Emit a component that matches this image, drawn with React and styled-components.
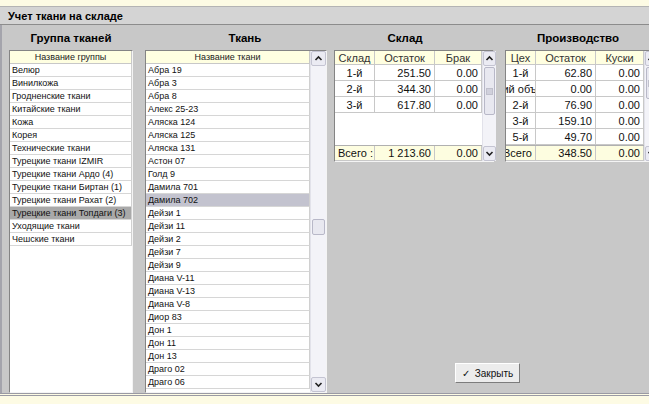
import styled, { createGlobalStyle } from "styled-components";

const GlobalStyle = createGlobalStyle`
  html, body {
    margin: 0;
    padding: 0;
    background: #c8c8c8;
  }
  body {
    font-family: "Liberation Sans", Arial, sans-serif;
    color: #000;
  }
`;

const Window = styled.div`
  width: 649px;
  height: 404px;
  display: flex;
  flex-direction: column;
  overflow: hidden;
  background: #c8c8c8;
`;

const TopStrip = styled.div`
  height: 6px;
  flex: none;
  background: #fdfbe4;
  border-bottom: 1px solid #b4b4b4;
`;

const TitleBar = styled.div`
  height: 17px;
  flex: none;
  display: flex;
  align-items: center;
  padding-left: 8px;
  background: #d4d4d4;
  border-bottom: 1px solid #8c8c8c;
  font-size: 11px;
  font-weight: bold;
`;

const Body = styled.div`
  flex: 1;
  min-height: 0;
  display: flex;
  padding-left: 7px;
  border-left: 2px solid #a4a4ac;
`;

const BottomStrip = styled.div`
  height: 8px;
  flex: none;
  background: #fdfbe4;
  border-top: 3px double #9a9aa4;
`;

const Column = styled.div`
  display: flex;
  flex-direction: column;
  flex: none;
  width: ${(p) => p.$width}px;
  margin-right: ${(p) => p.$gap || 0}px;
`;

const Heading = styled.div`
  height: 25px;
  flex: none;
  display: flex;
  align-items: center;
  justify-content: center;
  padding-left: ${(p) => p.$left || 0}px;
  padding-right: ${(p) => p.$right || 0}px;
  font-size: 11.5px;
  font-weight: bold;
`;

const ListBox = styled.div`
  flex: 1;
  min-height: 0;
  display: flex;
  background: #fff;
  border: 1px solid;
  border-color: #848484 #f4f4f4 #f4f4f4 #848484;
  overflow: hidden;
`;

const ListBody = styled.div`
  flex: 1;
  min-width: 0;
  display: flex;
  flex-direction: column;
`;

const ListHeader = styled.div`
  height: 12px;
  line-height: 12px;
  flex: none;
  background: #ffffe1;
  text-align: center;
  font-size: 9px;
  color: #222;
  border-bottom: 1px solid #c8c8c8;
  border-right: 1px solid #c8c8c8;
`;

const ListRow = styled.div`
  height: 12px;
  line-height: 12px;
  flex: none;
  padding-left: 2px;
  font-size: 9px;
  white-space: nowrap;
  overflow: hidden;
  color: #111;
  background: ${(p) => p.$selected || "#fff"};
  border-bottom: 1px solid #d6d6d6;
  border-right: 1px solid #d0d0d0;
`;

const ScrollBar = styled.div`
  width: ${(p) => p.$width || 15}px;
  flex: none;
  display: flex;
  flex-direction: column;
  background: #f3f3f8;
  border-left: 1px solid #e2e2ea;
`;

const ScrollButton = styled.div`
  height: 13px;
  flex: none;
  display: flex;
  align-items: center;
  justify-content: center;
  background: #ebebf3;
  border: 1px solid #c4c4d2;
  border-radius: 2px;
`;

const Track = styled.div`
  flex: 1;
  display: flex;
  flex-direction: column;
`;

const Thumb = styled.div`
  height: ${(p) => p.$height}px;
  margin: ${(p) => p.$top}px 1px 0;
  flex: none;
  display: flex;
  align-items: center;
  justify-content: center;
  background: #e8e8f0;
  border: 1px solid #b8b8c8;
  border-radius: 2px;
`;

const Grip = styled.div`
  width: 5px;
  height: 5px;
  background: #d0d0dc;
  border: 1px solid #c0c0cc;
`;

const RightArea = styled.div`
  flex: none;
  display: flex;
  flex-direction: column;
`;

const TablesRow = styled.div`
  display: flex;
  gap: 11px;
`;

const TableBox = styled.div`
  height: 110px;
  display: flex;
  background: #fff;
  border: 1px solid;
  border-color: #848484 #f4f4f4 #f4f4f4 #848484;
`;

const Grid = styled.div`
  display: flex;
  flex-direction: column;
  flex: none;
`;

const GridRow = styled.div`
  display: grid;
  grid-template-columns: ${(p) => p.$cols};
  height: ${(p) => p.$height}px;
  flex: none;
  background: ${(p) => p.$bg || "#fff"};
  border-bottom: 1px solid #c8c8c8;
  border-top: ${(p) => (p.$total ? "1px solid #b0b0b0" : "none")};
`;

const Filler = styled.div`
  flex: 1;
  background: #fff;
`;

const Cell = styled.div`
  display: flex;
  align-items: center;
  justify-content: ${(p) => p.$align || "center"};
  padding: 0 ${(p) => (p.$align === "center" ? 0 : 3)}px;
  padding-right: ${(p) => (p.$shift ? p.$shift : p.$align === "center" ? 0 : 3)}px;
  overflow: hidden;
  white-space: nowrap;
  font-size: 11px;
  color: ${(p) => (p.$head ? "#333" : "#111")};
  border-right: 1px solid #c8c8c8;
`;

const CloseButton = styled.button`
  align-self: flex-start;
  margin: auto 0 10px 121px;
  width: 65px;
  height: 20px;
  display: flex;
  align-items: center;
  justify-content: center;
  gap: 5px;
  padding: 0;
  background: #ececec;
  border: 1px solid;
  border-color: #ffffff #7c7c7c #7c7c7c #ffffff;
  font-family: "Liberation Sans", Arial, sans-serif;
  font-size: 10px;
  color: #111;
`;

const Chevron = ({ down }) => (
  <svg width="9" height="7" viewBox="0 0 9 7">
    <polyline
      points={down ? "1.5,2 4.5,5 7.5,2" : "1.5,5 4.5,2 7.5,5"}
      fill="none"
      stroke="#222"
      strokeWidth="1.6"
    />
  </svg>
);

const Scroll = ({ top, height, width }) => (
  <ScrollBar $width={width}>
    <ScrollButton>
      <Chevron />
    </ScrollButton>
    <Track>
      <Thumb $top={top} $height={height}>
        {height > 20 && <Grip />}
      </Thumb>
    </Track>
    <ScrollButton>
      <Chevron down />
    </ScrollButton>
  </ScrollBar>
);

const groups = [
  "Велюр",
  "Винилкожа",
  "Гродненские ткани",
  "Китайские ткани",
  "Кожа",
  "Корея",
  "Технические ткани",
  "Турецкие ткани IZMIR",
  "Турецкие ткани Ардо (4)",
  "Турецкие ткани Биртан (1)",
  "Турецкие ткани Рахат (2)",
  "Турецкие ткани Топдаги (3)",
  "Уходящие ткани",
  "Чешские ткани",
];

const fabrics = [
  "Абра 19",
  "Абра 3",
  "Абра 8",
  "Алекс 25-23",
  "Аляска 124",
  "Аляска 125",
  "Аляска 131",
  "Астон 07",
  "Голд 9",
  "Дамила 701",
  "Дамила 702",
  "Дейзи 1",
  "Дейзи 11",
  "Дейзи 2",
  "Дейзи 7",
  "Дейзи 9",
  "Диана V-11",
  "Диана V-13",
  "Диана V-8",
  "Диор 83",
  "Дон 1",
  "Дон 11",
  "Дон 13",
  "Драго 02",
  "Драго 06",
];

const stock = [
  ["1-й", "251.50", "0.00"],
  ["2-й", "344.30", "0.00"],
  ["3-й", "617.80", "0.00"],
];

const production = [
  ["1-й", "62.80", "0.00"],
  ["Общий объем", "0.00", "0.00", 12],
  ["2-й", "76.90", "0.00"],
  ["3-й", "159.10", "0.00"],
  ["5-й", "49.70", "0.00"],
];

const stockCols = "40px 60px 47px";
const prodCols = "30px 60px 48px";

function DataTable({ cols, head, rows, total, filler, scroll }) {
  return (
    <TableBox>
      <Grid>
        <GridRow $cols={cols} $height={13} $bg="#ffffe1">
          {head.map((h) => (
            <Cell key={h} $head>
              {h}
            </Cell>
          ))}
        </GridRow>
        {rows.map((r, i) => (
          <GridRow key={i} $cols={cols} $height={15}>
            <Cell $align="center" $shift={r[3]}>
              {r[0]}
            </Cell>
            <Cell $align="flex-end">{r[1]}</Cell>
            <Cell $align="flex-end">{r[2]}</Cell>
          </GridRow>
        ))}
        {filler && <Filler />}
        <GridRow $cols={cols} $height={14} $bg="#fdfde0" $total>
          <Cell $align={total[3] ? "center" : "flex-start"}>{total[0]}</Cell>
          <Cell $align="flex-end">{total[1]}</Cell>
          <Cell $align="flex-end">{total[2]}</Cell>
        </GridRow>
      </Grid>
      <Scroll top={1} height={scroll} width={13} />
    </TableBox>
  );
}

export default function App() {
  return (
    <>
      <GlobalStyle />
      <Window>
        <TopStrip />
        <TitleBar>Учет ткани на складе</TitleBar>
        <Body>
          <Column $width={124} $gap={12}>
            <Heading>Группа тканей</Heading>
            <ListBox>
              <ListBody>
                <ListHeader>Название группы</ListHeader>
                {groups.map((g) => (
                  <ListRow
                    key={g}
                    $selected={g === "Турецкие ткани Топдаги (3)" ? "#a9a9a9" : null}
                  >
                    {g}
                  </ListRow>
                ))}
              </ListBody>
            </ListBox>
          </Column>

          <Column $width={182} $gap={7}>
            <Heading $left={18}>Ткань</Heading>
            <ListBox>
              <ListBody>
                <ListHeader>Название ткани</ListHeader>
                {fabrics.map((f) => (
                  <ListRow key={f} $selected={f === "Дамила 702" ? "#c3c3cf" : null}>
                    {f}
                  </ListRow>
                ))}
              </ListBody>
              <Scroll top={153} height={14} />
            </ListBox>
          </Column>

          <RightArea>
            <TablesRow>
              <Column $width={160}>
                <Heading $right={18}>Склад</Heading>
                <DataTable
                  cols={stockCols}
                  head={["Склад", "Остаток", "Брак"]}
                  rows={stock}
                  total={["Всего :", "1 213.60", "0.00"]}
                  filler
                  scroll={46}
                />
              </Column>
              <Column $width={155}>
                <Heading $right={9}>Производство</Heading>
                <DataTable
                  cols={prodCols}
                  head={["Цех", "Остаток", "Куски"]}
                  rows={production}
                  total={["Всего :", "348.50", "0.00", true]}
                  scroll={30}
                />
              </Column>
            </TablesRow>
            <CloseButton>
              <span>✓</span>
              <span>Закрыть</span>
            </CloseButton>
          </RightArea>
        </Body>
        <BottomStrip />
      </Window>
    </>
  );
}
